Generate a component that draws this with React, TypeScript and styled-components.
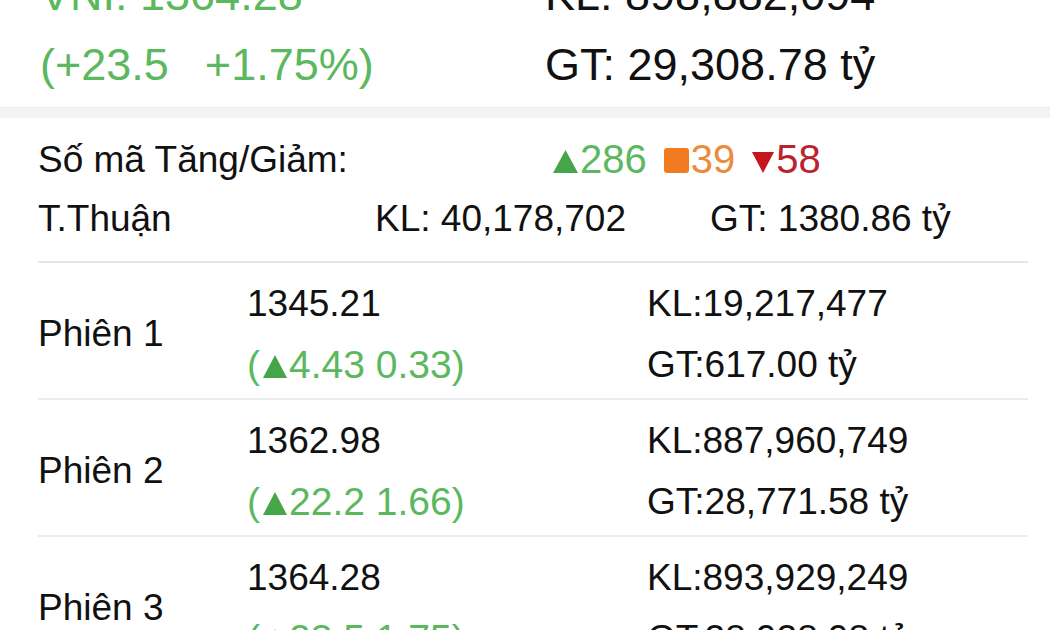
import React from 'react';
import styled, { createGlobalStyle } from 'styled-components';

type Tone = 'up' | 'ref' | 'down' | 'plain';

const palette: Record<Tone, { text: string; icon: string }> = {
  up: { text: '#5cb85f', icon: '#45a548' },
  ref: { text: '#ee8a3d', icon: '#f27b22' },
  down: { text: '#bb232b', icon: '#c4161c' },
  plain: { text: '#111111', icon: '#111111' },
};

interface ISession {
  name: string;
  index: string;
  change: string;
  percent: string;
  volume: string;
  value: string;
}

const sessions: ISession[] = [
  { name: 'Phiên 1', index: '1345.21', change: '4.43', percent: '0.33', volume: '19,217,477', value: '617.00' },
  { name: 'Phiên 2', index: '1362.98', change: '22.2', percent: '1.66', volume: '887,960,749', value: '28,771.58' },
  { name: 'Phiên 3', index: '1364.28', change: '23.5', percent: '1.75', volume: '893,929,249', value: '28,928.98' },
];

const GlobalStyle = createGlobalStyle`
  html, body {
    margin: 0;
    padding: 0;
    background: #ffffff;
    overflow: hidden;
  }
  body {
    font-family: 'Liberation Sans', Arial, Helvetica, sans-serif;
    color: #111111;
  }
`;

const Page = styled.div`
  width: 1050px;
  height: 630px;
  overflow: hidden;
  background: #ffffff;
`;

const Header = styled.header`
  margin-top: -40px;
  display: grid;
  grid-template-columns: 505px 1fr;
  grid-auto-rows: 70px;
  padding: 0 0 7px 40px;
  font-size: 45px;
  line-height: 70px;
`;

const HeaderCell = styled.div<{ $tone: Tone }>`
  display: flex;
  gap: 36px;
  color: ${({ $tone }) => palette[$tone].text};
  white-space: nowrap;
`;

const Band = styled.div`
  height: 10px;
  background: #f3f3f3;
  border-top: 1px solid #ebebeb;
`;

const Board = styled.section`
  margin: 0 22px 0 38px;
  font-size: 37px;
`;

const Summary = styled.div`
  padding: 12px 0 13px;
  border-bottom: 2px solid #e6e6e6;
`;

const SummaryRow = styled.div<{ $cols: string }>`
  display: grid;
  grid-template-columns: ${({ $cols }) => $cols};
  height: 59px;
  line-height: 59px;
  white-space: nowrap;
`;

const Counts = styled.div`
  display: flex;
  align-items: baseline;
  font-size: 40px;
`;

const Count = styled.span<{ $tone: Tone }>`
  color: ${({ $tone }) => palette[$tone].text};
  margin-right: 17px;
  svg {
    margin-right: 2px;
  }
`;

const Session = styled.div`
  display: grid;
  grid-template-columns: 209px 400px 1fr;
  align-items: center;
  padding: 10px 0 3px;
  border-bottom: 2px solid #ececec;
`;

const Stack = styled.div`
  display: flex;
  flex-direction: column;
  line-height: 61px;
  white-space: nowrap;
`;

const Change = styled.span<{ $tone: Tone }>`
  color: ${({ $tone }) => palette[$tone].text};
  font-size: 39px;
  svg {
    margin: 0 2px 0 3px;
  }
`;

const Marker: React.FC<{ kind: 'up' | 'down' | 'ref'; w: number; h: number }> = ({ kind, w, h }) => {
  const fill = palette[kind].icon;
  return (
    <svg width={w} height={h} viewBox={`0 0 ${w} ${h}`} style={{ display: 'inline-block', verticalAlign: 0 }}>
      {kind === 'up' && <polygon points={`${w / 2},0 ${w},${h} 0,${h}`} fill={fill} />}
      {kind === 'down' && <polygon points={`0,0 ${w},0 ${w / 2},${h}`} fill={fill} />}
      {kind === 'ref' && <rect x='0' y='0' width={w} height={h} rx='3' fill={fill} />}
    </svg>
  );
};

export default function App() {
  return (
    <Page>
      <GlobalStyle />
      <Header>
        <HeaderCell $tone='up'>VNI: 1364.28</HeaderCell>
        <HeaderCell $tone='plain'>KL: 898,882,094</HeaderCell>
        <HeaderCell $tone='up'>
          <span>(+23.5</span>
          <span>+1.75%)</span>
        </HeaderCell>
        <HeaderCell $tone='plain'>GT: 29,308.78 tỷ</HeaderCell>
      </Header>
      <Band />
      <Board>
        <Summary>
          <SummaryRow $cols='515px 1fr'>
            <span>Số mã Tăng/Giảm:</span>
            <Counts>
              <Count $tone='up'>
                <Marker kind='up' w={25} h={23} />
                286
              </Count>
              <Count $tone='ref'>
                <Marker kind='ref' w={25} h={25} />
                39
              </Count>
              <Count $tone='down'>
                <Marker kind='down' w={22} h={21} />
                58
              </Count>
            </Counts>
          </SummaryRow>
          <SummaryRow $cols='337px 335px 1fr'>
            <span>T.Thuận</span>
            <span>KL: 40,178,702</span>
            <span>GT: 1380.86 tỷ</span>
          </SummaryRow>
        </Summary>
        {sessions.map((s) => (
          <Session key={s.name}>
            <span>{s.name}</span>
            <Stack>
              <span>{s.index}</span>
              <Change $tone='up'>
                (<Marker kind='up' w={24} h={23} />
                {s.change} {s.percent})
              </Change>
            </Stack>
            <Stack>
              <span>KL:{s.volume}</span>
              <span>GT:{s.value} tỷ</span>
            </Stack>
          </Session>
        ))}
      </Board>
    </Page>
  );
}
